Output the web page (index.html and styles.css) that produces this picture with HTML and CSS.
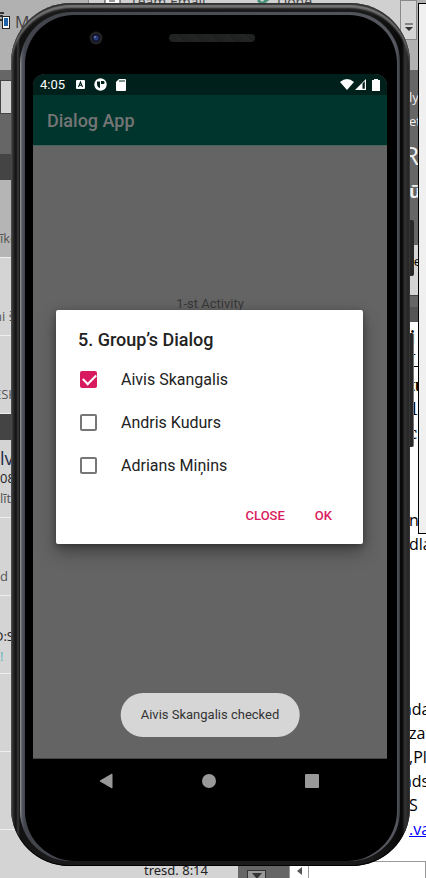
FILE: index.html
```html
<!DOCTYPE html>
<html lang="en">
<head>
<meta charset="utf-8">
<meta name="viewport" content="width=device-width, initial-scale=1">
<title>Dialog App</title>
<link rel="stylesheet" href="styles.css">
</head>
<body>
<div class="desktop">
  <div class="backdrop">
    <div class="ribbon">
      <div class="ribbon-start">
        <svg class="tablet-icon" width="12" height="18" viewBox="0 0 12 18"><path d="M0 1h4M0 4h3M0 8h2" stroke="#333" stroke-width="2"/><rect x="2.500" y="4.500" width="7" height="12" fill="#fff" stroke="#222"/><rect x="4" y="6" width="4" height="8" fill="#1f62a8"/></svg>
        <span>M</span>
      </div>
      <div class="ribbon-steps">
        <svg width="18" height="9" viewBox="0 0 18 9"><path d="M1 0v8h15V0" fill="#fff" stroke="#333"/><path d="M5 1h6" stroke="#333"/></svg>
        <span class="step-name">Team Email</span>
        <svg class="tick" width="12" height="7" viewBox="0 0 12 7"><path d="M1 0l4 4 6-5" fill="none" stroke="#479078" stroke-width="3"/></svg>
        <span>Done</span>
      </div>
      <div class="ribbon-more"><svg width="8" height="8" viewBox="0 0 8 8"><path d="M0 1h8" stroke="#333"/><path d="M0 4h8L4 8z" fill="#333"/></svg></div>
      <div class="ribbon-end"></div>
    </div>
    <div class="workspace">
      <div class="mail">
        <div class="search"></div>
        <div class="group group-first"></div>
        <div class="row selected"><span>īko</span></div>
        <div class="row tucked"><span>ni š</span></div>
        <div class="row tucked"><span>ESK</span></div>
        <div class="group"></div>
        <div class="row row-full"><b>lv</b><i>08</i><span>līt</span></div>
        <div class="row"><span class="inset">d</span></div>
        <div class="row row-full row-late tucked"><i>D:S</i><span class="flag">!</span></div>
        <div class="row"></div>
        <div class="row"></div>
        <div class="row row-last"><span>tresd. 8:14</span></div>
      </div>
      <div class="scroll"><span><svg width="10" height="6" viewBox="0 0 10 6"><path d="M0 0h10L5 6z" fill="#333"/></svg></span></div>
      <div class="page">
        <div class="page-head"><p>ly</p><p>et</p><p class="big">R</p><p class="bold">ū</p></div>
        <div class="tab">te</div>
        <div class="ruler"></div>
        <div class="paper">
          <div class="serif"><p>j</p><p>L</p><p>tu</p><p>1</p><p>c</p></div>
          <div class="para"><p>n</p><p>dla</p></div>
          <div class="para para-two"><p class="under">nda</p><p>zat</p><p>,Pl</p><p class="under">nds</p><p>S</p><p><a href="#">.va</a></p></div>
        </div>
        <div class="hscroll"><span><svg width="5" height="8" viewBox="0 0 5 8"><path d="M5 0v8L0 4z" fill="#555"/></svg></span></div>
      </div>
    </div>
  </div>
  <div class="side-window"></div>

  <div class="phone">
    <div class="key key-power"></div>
    <div class="key key-volume"></div>
    <div class="rim">
      <div class="face">
        <div class="forehead">
          <svg class="camera" width="14" height="14" viewBox="0 0 14 14"><circle cx="7" cy="7" r="6.500" fill="#222224"/><circle cx="7" cy="7" r="4" fill="#11152c"/><circle cx="7" cy="7" r="2.500" fill="#263a78"/><circle cx="6" cy="6" r="1" fill="#6e83b4"/></svg>
          <div class="speaker"></div>
        </div>
        <main class="screen">
          <div class="status">
            <time>4:05</time>
            <svg width="9" height="9" viewBox="0 0 9 9"><rect width="9" height="9" rx="1" fill="#fff"/><path d="M2.500 7L4.500 2l2 5M3.300 5.300h2.400" fill="none" stroke="#00201c" stroke-width="1.100"/></svg>
            <svg width="13" height="13" viewBox="0 0 13 13"><circle cx="6.500" cy="6.500" r="6.200" fill="#fff"/><path d="M3 3.500h3V10Q3 9 3 6z" fill="#00201c"/><path d="M7 3h2.500q1 0 1 1.500t-1 1.500H7z" fill="#00201c"/></svg>
            <svg width="10" height="12" viewBox="0 0 10 12"><path d="M3 0h6q1 0 1 1v10q0 1-1 1H1q-1 0-1-1V3z" fill="#fff"/><path d="M4 1v2M6 1v2M8 1v2" stroke="#00201c"/></svg>
            <span class="grow"></span>
            <svg class="wifi" width="14" height="11" viewBox="0 0 14 11"><path d="M0 3Q7-3 14 3L7 11z" fill="#fff"/></svg>
            <svg class="signal" width="11" height="11" viewBox="0 0 11 11"><path d="M0 11L11 0v11z" fill="#fff"/><path d="M7.500 4.500L9.800 2.200v7.600H7.500z" fill="#00201c"/></svg>
            <svg width="8" height="12" viewBox="0 0 8 12"><path d="M2 0h4v1h2v11H0V1h2z" fill="#fff"/></svg>
          </div>
          <h1 class="appbar">Dialog App</h1>
          <div class="activity"><p>1-st Activity</p></div>
          <form class="dialog" role="dialog" aria-labelledby="dialog-title">
            <h2 id="dialog-title">5. Group’s Dialog</h2>
            <label><input type="checkbox" checked><span>Aivis Skangalis</span></label>
            <label><input type="checkbox"><span>Andris Kudurs</span></label>
            <label><input type="checkbox"><span>Adrians Miņins</span></label>
            <div class="actions"><button type="button">CLOSE</button><button type="button">OK</button></div>
          </form>
          <div class="toast" role="status">Aivis Skangalis checked</div>
        </main>
        <nav class="navbar">
          <button type="button" aria-label="Back"><svg width="14" height="16" viewBox="0 0 14 16"><path d="M13 1v14L1 8z" fill="#999" stroke="#999" stroke-linejoin="round"/></svg></button>
          <button type="button" aria-label="Home"><svg width="14" height="14" viewBox="0 0 14 14"><circle cx="7" cy="7" r="7" fill="#999"/></svg></button>
          <button type="button" aria-label="Recent apps"><svg width="14" height="14" viewBox="0 0 14 14"><rect width="14" height="14" rx="1" fill="#999"/></svg></button>
        </nav>
      </div>
    </div>
  </div>
</div>
</body>
</html>
```
FILE: styles.css
```css
* { box-sizing: border-box; }
body { margin: 0; font-family: Roboto, sans-serif; }
p, h1, h2 { margin: 0; }
.desktop { display: grid; position: relative; min-height: 100vh; overflow: hidden; }
.desktop > .backdrop, .desktop > .phone { grid-area: 1 / 1; }

/* Desktop behind the device */
.backdrop { display: flex; flex-direction: column; min-width: 0; background: #666; color: #444; font: 13px/20px "Open Sans", "Noto Sans", sans-serif; white-space: nowrap; }
.ribbon { display: flex; height: 70px; background: #b1b1b1; }
.ribbon-start { display: flex; gap: 3px; width: 88px; padding: 12px 0 0; font-size: 16px; }
.ribbon-steps { display: flex; flex: 1; gap: 8px; height: 40px; padding-left: 15px; background: #d0d0d0; border-left: 1px solid #888; font-size: 14px; line-height: 4px; }
.step-name { width: 119px; }
.ribbon-more { display: flex; justify-content: center; width: 17px; height: 40px; padding-top: 22px; background: #d4d4d4; border: 1px solid #888; }
.ribbon-end { width: 9px; }
.workspace { display: flex; flex: 1; }
.mail { display: flex; flex-direction: column; width: 238px; overflow: hidden; }
.search { height: 34px; margin: 10px 0 40px; background: #d4d4d4; border: 1px solid #444; }
.group { height: 26px; background: #444; }
.row { height: 78px; padding-top: 48px; background: #d4d4d4; border-bottom: 1px solid #eee; color: #555; }
.row span { display: block; line-height: 20px; }
.row.selected { background: #b5b5b5; }
.row b, .row i { display: block; color: #222; font-style: normal; font-weight: 400; }
.row b { color: #1d2b48; font-size: 18px; }
.row i { line-height: 20px; }
.row-full { padding-top: 8px; }
.row-late { padding-top: 30px; }
.tucked span, .tucked i { margin-left: -6px; }
.row .flag { margin-left: 0; color: #5cb4c0; }
.row-last { flex: 1; padding: 30px 30px 0 0; border: 0; color: #222; font: 13px/20px "Noto Sans", sans-serif; text-align: right; }
.scroll { display: flex; align-items: flex-end; width: 51px; padding-left: 9px; background: #666; }
.scroll span { display: flex; align-items: end; justify-content: center; width: 19px; height: 10px; background: #999; border: 1px solid #333; }
.page { display: flex; flex: 1; flex-direction: column; background: #666; color: #000; font-size: 16px; line-height: 24px; min-width: 0; overflow: hidden; }
.page p, .tab { padding-left: 120px; }
.page-head { height: 175px; padding-top: 15px; color: #eee; font-size: 13px; }
.page-head .big { font-size: 26px; line-height: 44px; padding-left: 114px; }
.page-head .bold { font-size: 18px; font-weight: 700; line-height: 28px; }
.tab { height: 50px; background: #d4d4d4; font-size: 13px; line-height: 32px; }
.ruler { height: 27px; border-bottom: 15px solid #555; border-top: 1px solid #444; }
.paper { flex: 1; background: #fff; }
.serif { height: 186px; padding-top: 3px; font: 700 18px/24px "Liberation Serif", serif; }
.para-two { margin-top: 141px; }
.paper .para .under { padding-left: 113px; }
.hscroll { height: 19px; background: #fff; border: 1px solid #999; }
.paper a { color: #00f; }
.hscroll span { display: flex; align-items: center; justify-content: center; width: 19px; height: 17px; border-right: 1px solid #999; }
.side-window { position: absolute; top: 3px; right: 0; width: 8px; height: 531px; background: #f0f0f0; border: solid #000; border-width: 1px 0 1px 1px; }

/* Device */
.phone { position: relative; display: flex; align-self: start; margin: 3px 16px 0 11px; padding: 9px 10px 5px 9px; border-radius: 60px 60px 58px 58px; background: linear-gradient(90deg, #444 0, #222 3px, #111 5px, #3a3a3a 7px, #111 9px, #1a1a1a 40px, #1a1a1a calc(100% - 40px), #080808 calc(100% - 8px), #333 calc(100% - 5px), #1c1c1c 100%); box-shadow: inset 0 2px 1px #333, inset 0 5px 2px #777, inset 0 -1px #000; }
.key { position: absolute; left: 100%; width: 4px; background: #292929; border-radius: 0 2px 2px 0; }
.key-power { top: 217px; height: 56px; }
.key-volume { top: 330px; height: 114px; border-right: 1px solid #777; }
.rim { flex: 1; padding: 3px 3px 0 5px; border-radius: 52px 50px 50px 50px; background: linear-gradient(90deg, #999 0, #555862 2px, #42444c 5px, #55575f calc(100% - 3px), #33353a 100%); }
.face { padding: 0 10px 58px 8px; border-radius: 49px 48px 50px 50px; background: #000; }
.forehead { display: flex; align-items: center; height: 59px; padding: 0 0 13px 56px; }
.speaker { width: 86px; height: 8px; margin-left: 66px; border-radius: 4px; background: repeating-linear-gradient(45deg, #1b1d1d 0, #272929 2px); }
.screen { position: relative; border-radius: 12px 12px 0 0; overflow: hidden; background: #646464; }
.status { display: flex; align-items: center; height: 21px; padding: 0 7px; background: #00201c; color: #fff; font-size: 13px; }
.status time { width: 36px; }
.status svg + svg { margin-left: 9px; }
.status .grow { flex: 1; }
.status .signal.signal { margin-left: 1px; }
.status .signal + svg { margin-left: 6px; }
.appbar { height: 51px; padding-left: 14px; background: #00352e; border-bottom: 1px solid #48625f; color: #757575; font-size: 18px; font-weight: 500; line-height: 52px; }
.activity { height: 613px; padding-top: 149px; border-bottom: 1px solid #444; color: #383838; font-size: 13px; line-height: 18px; text-align: center; }
.dialog { position: absolute; top: 236px; left: 23px; right: 24px; padding: 18px 22px 10px; border-radius: 2px; background: #fff; box-shadow: 0 8px 18px rgba(0, 0, 0, .35), 0 2px 6px rgba(0, 0, 0, .3); color: #222; }
.dialog h2 { margin-bottom: 6px; font-size: 18px; font-weight: 500; line-height: 24px; }
.dialog label { display: flex; align-items: center; gap: 24px; height: 43px; padding-left: 2px; font-size: 16px; }
.dialog input { appearance: none; width: 17px; height: 17px; margin: 0; border: 2px solid #777; border-radius: 2px; background: #fff; }
.dialog input:checked { border-color: #d81b60; background: #d81b60; position: relative; }
.dialog input:checked::after { content: ""; position: absolute; top: 1px; left: 1px; width: 11px; height: 6px; border: solid #fff; border-width: 0 0 2px 2px; transform: rotate(-45deg); }
.actions { display: flex; justify-content: flex-end; gap: 14px; padding: 11px 1px 0 0; }
.actions button { height: 36px; padding: 0 8px; border: 0; background: none; color: #d81b60; font: 500 13px/16px Roboto, sans-serif; }
.toast { position: absolute; bottom: 22px; left: 50%; transform: translateX(-50%); padding: 13px 20px; border-radius: 22px; background: #d6d6d6; color: #333; font-size: 13px; line-height: 18px; white-space: nowrap; }
.navbar { display: flex; justify-content: space-between; height: 44px; padding: 0 68px 0 66px; }
.navbar button { display: flex; align-items: center; padding: 0; border: 0; background: none; }
```
